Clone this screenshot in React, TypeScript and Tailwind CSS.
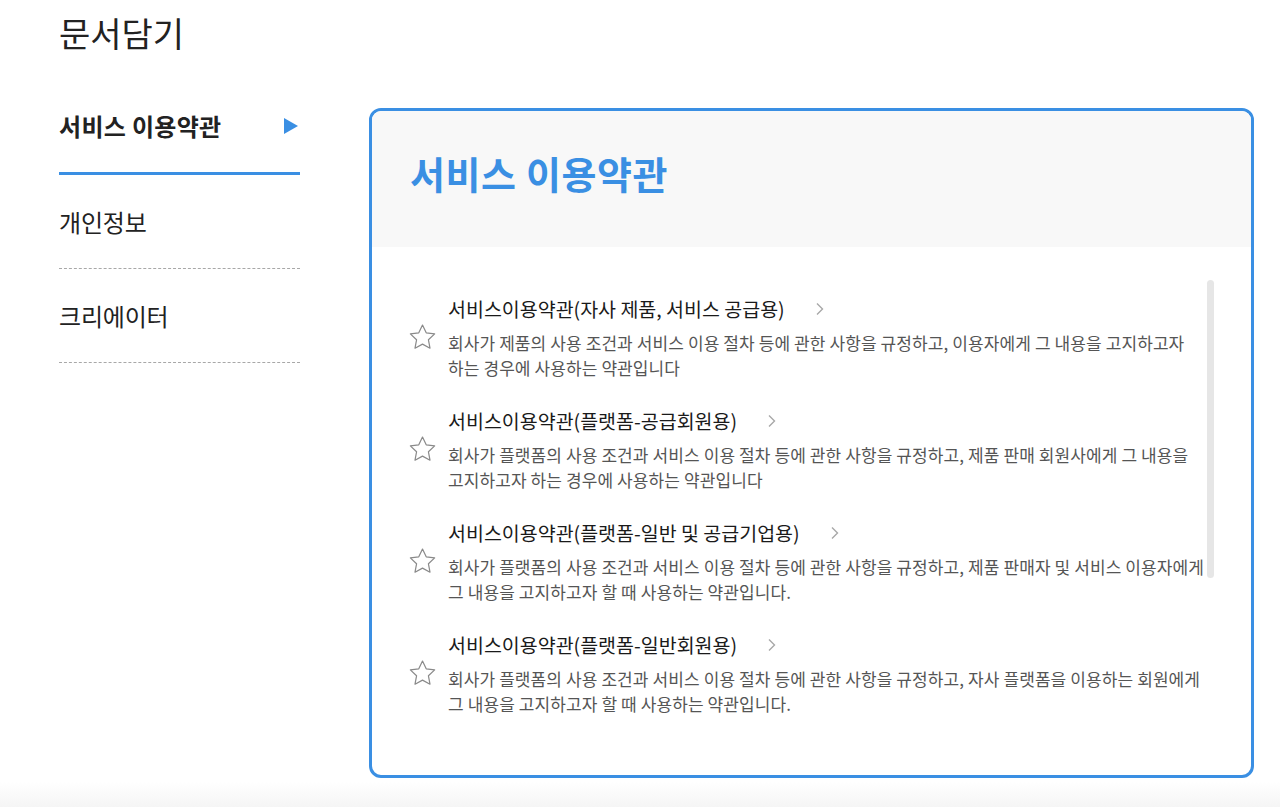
import { useState } from "react";

type Doc = {
  title: string;
  lines: string[];
};

const docs: Doc[] = [
  {
    title: "서비스이용약관(자사 제품, 서비스 공급용)",
    lines: [
      "회사가 제품의 사용 조건과 서비스 이용 절차 등에 관한 사항을 규정하고, 이용자에게 그 내용을 고지하고자",
      "하는 경우에 사용하는 약관입니다",
    ],
  },
  {
    title: "서비스이용약관(플랫폼-공급회원용)",
    lines: [
      "회사가 플랫폼의 사용 조건과 서비스 이용 절차 등에 관한 사항을 규정하고, 제품 판매 회원사에게 그 내용을",
      "고지하고자 하는 경우에 사용하는 약관입니다",
    ],
  },
  {
    title: "서비스이용약관(플랫폼-일반 및 공급기업용)",
    lines: [
      "회사가 플랫폼의 사용 조건과 서비스 이용 절차 등에 관한 사항을 규정하고, 제품 판매자 및 서비스 이용자에게",
      "그 내용을 고지하고자 할 때 사용하는 약관입니다.",
    ],
  },
  {
    title: "서비스이용약관(플랫폼-일반회원용)",
    lines: [
      "회사가 플랫폼의 사용 조건과 서비스 이용 절차 등에 관한 사항을 규정하고, 자사 플랫폼을 이용하는 회원에게",
      "그 내용을 고지하고자 할 때 사용하는 약관입니다.",
    ],
  },
];

const menus = ["서비스 이용약관", "개인정보", "크리에이터"];

function StarIcon() {
  return (
    <svg width="27" height="27" viewBox="2 2 20 20" fill="none">
      <path
        d="M12 2.8l2.75 5.75 6.25.8-4.6 4.35 1.15 6.2L12 16.9l-5.55 3 1.15-6.2L3 9.35l6.25-.8L12 2.8z"
        stroke="#8a8a8a"
        strokeWidth="0.9"
        strokeLinejoin="round"
      />
    </svg>
  );
}

function Chevron() {
  return (
    <svg width="10" height="14" viewBox="0 0 10 14" fill="none">
      <path d="M2 1.5l5.5 5.5L2 12.5" stroke="#a8a8a8" strokeWidth="1.4" />
    </svg>
  );
}

export default function App() {
  const [active, setActive] = useState(0);

  return (
    <div className="min-h-screen bg-white text-[#222] font-['Noto_Sans_CJK_KR','Noto_Sans',sans-serif]">
      <div className="px-[59px]">
        <h1 className="pt-[13px] text-[34px] leading-[40px] font-normal">문서담기</h1>

        <div className="flex mt-[28px] gap-[69px]">
          {/* Side menu */}
          <nav className="w-[241px] shrink-0">
            {menus.map((m, i) => (
              <button
                key={m}
                onClick={() => setActive(i)}
                className={
                  i === active
                    ? "flex w-full items-center justify-between pt-[30px] pb-[31px] border-b-[3px] border-[#3a8fe3] text-[24px] leading-[30px] font-bold tracking-[0.3px] text-left"
                    : "flex w-full items-center justify-between pt-[32px] pb-[31px] border-b border-dashed border-[#a8a8a8] text-[24px] leading-[30px] font-normal tracking-[-0.2px] text-left"
                }
              >
                <span>{m}</span>
                {i === active && (
                  <svg width="14" height="16" viewBox="0 0 14 16" className="mr-[2px]">
                    <polygon points="0,0 14,8 0,16" fill="#3a8fe3" />
                  </svg>
                )}
              </button>
            ))}
          </nav>

          {/* Document list card */}
          <section className="mt-[27px] w-[885px] h-[670px] shrink-0 border-[3px] border-[#3a8fe3] rounded-[12px] overflow-hidden flex flex-col">
            <div className="h-[136px] bg-[#f8f8f8] pt-[40px] pl-[38px]">
              <h2 className="text-[38px] leading-[44px] font-bold text-[#3a8fe3] tracking-[0.6px]">{menus[active]}</h2>
            </div>

            <div className="relative flex-1 pt-[49px] pl-[38px]">
              <div className="flex flex-col gap-[28px]">
                {docs.map((d) => (
                  <div key={d.title} className="flex items-start">
                    <div className="w-[39px] shrink-0 pt-[28px] -ml-[1px]">
                      <StarIcon />
                    </div>
                    <div>
                      <div className="flex items-center h-[26px]">
                        <span className="text-[19.5px] leading-[26px] text-[#1a1a1a]">{d.title}</span>
                        <span className="ml-[30px] flex items-center">
                          <Chevron />
                        </span>
                      </div>
                      <div className="mt-[8px] text-[17px] leading-[25px] text-[#555] tracking-[0.1px]">
                        {d.lines.map((l) => (
                          <p key={l} className="whitespace-nowrap">
                            {l}
                          </p>
                        ))}
                      </div>
                    </div>
                  </div>
                ))}
              </div>

              {/* scroll thumb */}
              <div className="absolute left-[835px] top-[33px] w-[7px] h-[298px] rounded-full bg-[#e6e6e6]" />
            </div>
          </section>
        </div>
      </div>
      <div className="mt-[4px] h-[25px] bg-gradient-to-b from-white to-[#f5f5f5]" />
    </div>
  );
}
